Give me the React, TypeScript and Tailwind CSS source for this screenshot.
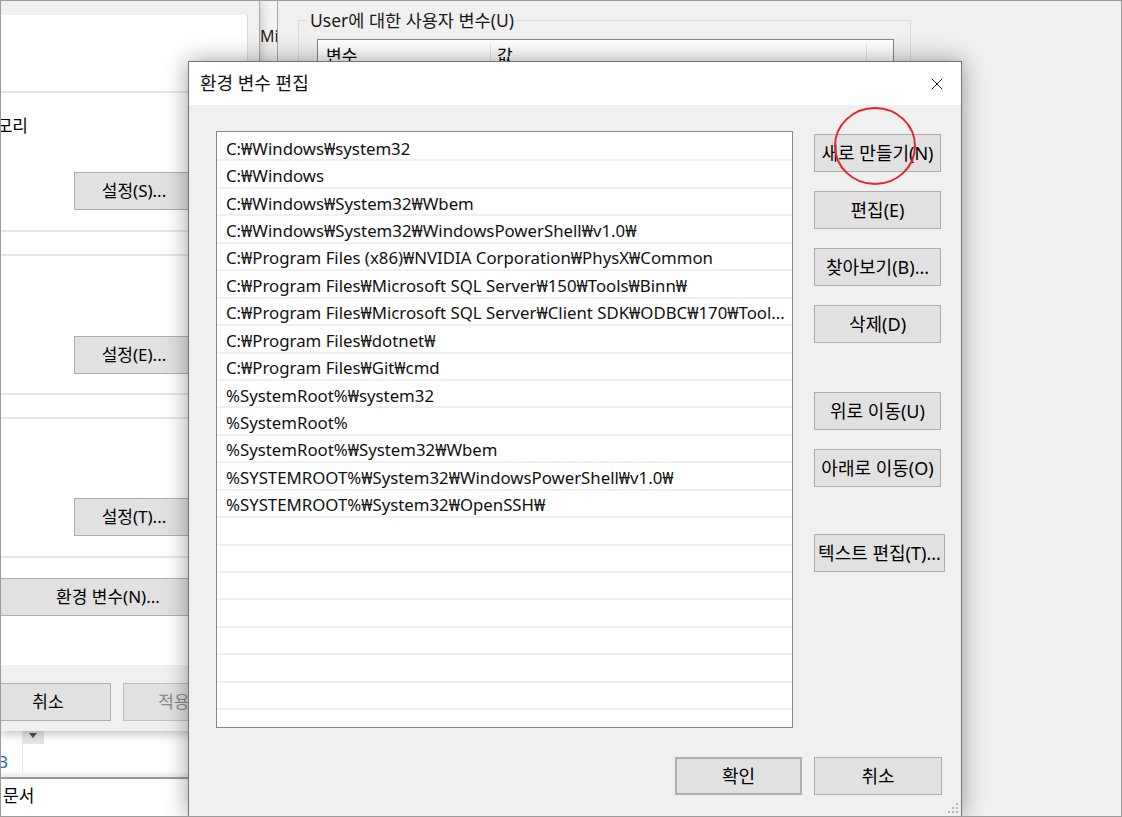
import { X } from "lucide-react";

const paths = [
  "C:₩Windows₩system32",
  "C:₩Windows",
  "C:₩Windows₩System32₩Wbem",
  "C:₩Windows₩System32₩WindowsPowerShell₩v1.0₩",
  "C:₩Program Files (x86)₩NVIDIA Corporation₩PhysX₩Common",
  "C:₩Program Files₩Microsoft SQL Server₩150₩Tools₩Binn₩",
  "C:₩Program Files₩Microsoft SQL Server₩Client SDK₩ODBC₩170₩Tool...",
  "C:₩Program Files₩dotnet₩",
  "C:₩Program Files₩Git₩cmd",
  "%SystemRoot%₩system32",
  "%SystemRoot%",
  "%SystemRoot%₩System32₩Wbem",
  "%SYSTEMROOT%₩System32₩WindowsPowerShell₩v1.0₩",
  "%SYSTEMROOT%₩System32₩OpenSSH₩",
];

const rows = [...paths, ...Array(8).fill("")];

function WinButton({ label, className = "" }: { label: string; className?: string }) {
  return (
    <div
      className={`flex h-[38px] shrink-0 items-center justify-center border border-[#adadad] bg-[#e1e1e1] whitespace-nowrap ${className}`}
    >
      {label}
    </div>
  );
}

function SettingsWindow() {
  return (
    <div className="absolute -left-px -top-px flex h-[731px] w-[260px] flex-col border-r border-[#a8a8a8] bg-[#f0f0f0] text-[17px] shadow-[0_3px_10px_rgba(0,0,0,0.25)]">
      <div className="h-[15px] shrink-0" />
      <div className="flex h-[650px] w-[248px] shrink-0 flex-col overflow-hidden border-r border-[#dadada] bg-white">
        <div className="h-[76px] shrink-0" />
        <div className="h-[141px] shrink-0 border-y-2 border-[#e6e6e6] pt-[22px]">
          <div className="-ml-[19px] h-[22px] leading-[22px]">메모리</div>
          <WinButton label="설정(S)..." className="mt-[35px] ml-[74px] w-[120px]" />
        </div>
        <div className="h-[22px] shrink-0" />
        <div className="h-[141px] shrink-0 border-y-2 border-[#e6e6e6] pt-[80px]">
          <WinButton label="설정(E)..." className="ml-[74px] w-[120px]" />
        </div>
        <div className="h-[22px] shrink-0" />
        <div className="h-[141px] shrink-0 border-y-2 border-[#e6e6e6] pt-[79px]">
          <WinButton label="설정(T)..." className="ml-[74px] w-[120px]" />
        </div>
        <div className="h-[20px] shrink-0" />
        <WinButton label="환경 변수(N)..." className="-ml-[6px] w-[228px]" />
      </div>
      <div className="flex gap-[12px] pt-[18px]">
        <WinButton label="취소" className="-ml-[15px] w-[126px]" />
        <WinButton
          label="적용"
          className="w-[102px] border-[#bfbfbf] bg-[#cccccc] text-[#8a8a8a]"
        />
      </div>
    </div>
  );
}

function ExplorerWindow() {
  return (
    <div className="absolute -left-px top-[699px] flex h-[120px] w-[220px] flex-col bg-white text-[17px]">
      <div className="h-[30px] shrink-0" />
      <div className="ml-[22px] flex h-[14px] w-[22px] items-start justify-center bg-[#e6e6e6]">
        <svg width="8" height="5" viewBox="0 0 8 5" className="mt-[3px]">
          <path d="M0 0 L8 0 L4 5 Z" fill="#505050" />
        </svg>
      </div>
      <div className="flex h-[33px]">
        <div className="-ml-[3px] w-[25px] pt-[5px] text-[#2f6db8]">B</div>
        <div className="h-[30px] border-l border-[#ececec]" />
      </div>
      <div className="h-[2px] bg-[#9a9a9a] shadow-[0_-2px_4px_rgba(0,0,0,0.2)]" />
      <div className="pl-[3px] pt-[4px]">문서</div>
    </div>
  );
}

function MiddleStrip() {
  return (
    <div className="absolute left-[257px] -top-px flex h-[80px] w-[22px] bg-[#f3f3f3]">
      <div className="h-full w-[2px] bg-[#dcdcdc]" />
      <div className="pt-[24px] text-[16px] text-[#222]">Mi</div>
    </div>
  );
}

function EnvVarsWindow() {
  return (
    <div className="absolute left-[276px] -top-px -right-px -bottom-px border-l border-[#a5a5a5] bg-[#f0f0f0] pt-[9px] pl-[20px]">
      <fieldset className="h-[260px] w-[613px] border border-[#dcdcdc]">
        <legend className="ml-[8px] px-[3px] text-[17.5px] leading-[22px] text-[#1a1a1a]">
          User에 대한 사용자 변수(U)
        </legend>
        <div className="mt-[8px] ml-[18px] h-[200px] w-[577px] border border-[#828790] bg-white">
          <div className="flex h-[32px] items-center border-b border-[#e5e5e5] text-[17px]">
            <div className="w-[173px] border-r border-[#e5e5e5] pl-[8px]">변수</div>
            <div className="flex-1 border-r border-[#e5e5e5] pl-[6px]">값</div>
            <div className="w-[26px]" />
          </div>
        </div>
      </fieldset>
    </div>
  );
}

function EditDialog() {
  return (
    <div className="absolute left-[187px] top-[60px] flex h-[756px] w-[774px] flex-col border border-[#747474] bg-[#f0f0f0] text-[18px] shadow-[0_0_22px_rgba(0,0,0,0.38)]">
      <div className="flex h-[43px] shrink-0 items-center justify-between bg-white pl-[11px] pr-[14px]">
        <span className="text-[#111]">환경 변수 편집</span>
        <X size={20} strokeWidth={1.2} color="#222" />
      </div>
      <div className="flex gap-[21px] pl-[27px] pt-[26px]">
        <div className="h-[597px] w-[577px] overflow-hidden border border-[#828790] bg-white pt-[2px]">
          {rows.map((p, i) => (
            <div
              key={i}
              className="flex h-[27.45px] items-center overflow-hidden border-b-2 border-[#f0f0f0] pt-[3px] pl-[9px] text-[16.8px] whitespace-nowrap text-[#111]"
            >
              {p}
            </div>
          ))}
        </div>
        <div className="flex flex-col pt-[3px]">
          <WinButton label="새로 만들기(N)" className="w-[127px]" />
          <WinButton label="편집(E)" className="mt-[19px] w-[127px]" />
          <WinButton label="찾아보기(B)..." className="mt-[19px] w-[127px]" />
          <WinButton label="삭제(D)" className="mt-[19px] w-[127px]" />
          <WinButton label="위로 이동(U)" className="mt-[49px] w-[127px]" />
          <WinButton label="아래로 이동(O)" className="mt-[19px] w-[127px]" />
          <WinButton label="텍스트 편집(T)..." className="mt-[47px] w-[131px]" />
        </div>
      </div>
      <div className="flex justify-end gap-[12px] pr-[19px] pt-[29px]">
        <WinButton label="확인" className="w-[127px] border-2 border-[#0078d7]" />
        <WinButton label="취소" className="w-[128px]" />
      </div>
      <svg
        width="12"
        height="12"
        viewBox="0 0 12 12"
        className="absolute right-[3px] bottom-[3px]"
      >
        {[
          [10, 2],
          [10, 6],
          [6, 6],
          [10, 10],
          [6, 10],
          [2, 10],
        ].map(([x, y], i) => (
          <rect key={i} x={x} y={y} width="2" height="2" fill="#b4b4b4" />
        ))}
      </svg>
    </div>
  );
}

export default function App() {
  return (
    <div className="relative h-[817px] w-[1122px] overflow-hidden border border-[#9b9b9b] bg-[#f0f0f0] font-['Noto_Sans','Noto_Sans_CJK_KR',sans-serif] text-black">
      <ExplorerWindow />
      <MiddleStrip />
      <EnvVarsWindow />
      <SettingsWindow />
      <EditDialog />
      <svg
        width="90"
        height="84"
        viewBox="0 0 90 84"
        className="absolute left-[829px] top-[103px]"
      >
        <ellipse cx="45" cy="42" rx="40" ry="38" fill="none" stroke="#e3262b" strokeWidth="2" />
      </svg>
    </div>
  );
}
